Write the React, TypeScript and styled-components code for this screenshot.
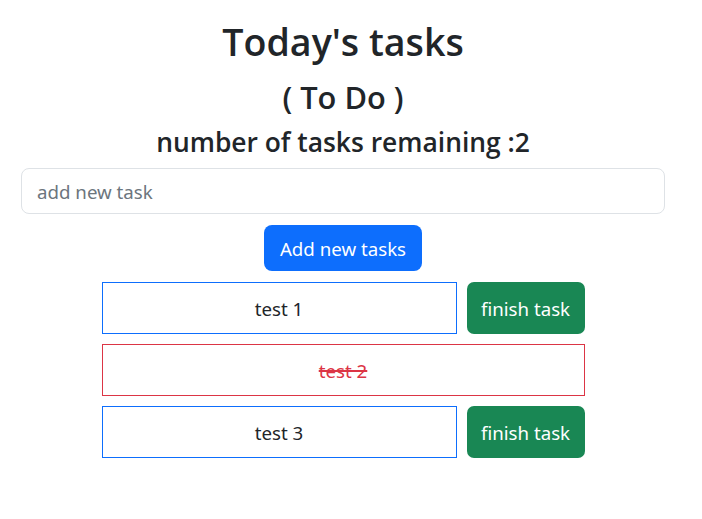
import React from "react";
import styled, { createGlobalStyle } from "styled-components";

const Global = createGlobalStyle`
  html, body { margin: 0; padding: 0; background: #fff; }
  body {
    font-family: "Noto Sans", "Open Sans", sans-serif;
    color: #212529;
  }
  * { box-sizing: border-box; }
`;

const Page = styled.div`
  display: flex;
  flex-direction: column;
  align-items: center;
  padding: 18px 37px 0 21px;
`;

const headingFont = `"Open Sans", "Noto Sans", sans-serif`;

const Title = styled.h1`
  margin: 0;
  font-family: ${headingFont};
  font-size: 37.6px;
  font-weight: 600;
  line-height: 48px;
`;

const Subtitle = styled.h2`
  margin: 14px 0 0;
  font-family: ${headingFont};
  font-size: 30.8px;
  font-weight: 600;
  line-height: 34px;
`;

const Remaining = styled.h3`
  margin: 13px 0 0;
  font-family: ${headingFont};
  font-size: 26.4px;
  font-weight: 600;
  line-height: 30px;
`;

const Input = styled.input`
  margin-top: 11px;
  width: 100%;
  height: 46px;
  padding: 0 15px;
  font-family: inherit;
  font-size: 18.7px;
  color: #212529;
  border: 1px solid #dee2e6;
  border-radius: 8px;
  outline: none;
  &::placeholder { color: #6c757d; }
`;

const PrimaryButton = styled.button`
  margin-top: 11px;
  height: 46px;
  padding: 0 16px;
  font-family: inherit;
  font-size: 18.7px;
  color: #fff;
  background: #0d6efd;
  border: none;
  border-radius: 8px;
`;

const List = styled.div`
  margin-top: 11px;
  width: 483px;
  display: flex;
  flex-direction: column;
  gap: 10px;
`;

const Row = styled.div`
  display: flex;
  gap: 10px;
`;

const TaskBox = styled.div<{ $done?: boolean }>`
  flex: 1;
  height: 52px;
  display: flex;
  align-items: center;
  justify-content: center;
  font-size: 18.7px;
  border: 1px solid ${(p) => (p.$done ? "#dc3545" : "#0d6efd")};
  color: ${(p) => (p.$done ? "#dc3545" : "#212529")};
  text-decoration: ${(p) => (p.$done ? "line-through" : "none")};
  text-decoration-thickness: 2px;
`;

const FinishButton = styled.button`
  width: 118px;
  height: 52px;
  font-family: inherit;
  font-size: 18.7px;
  color: #fff;
  background: #198754;
  border: none;
  border-radius: 7px;
`;

const tasks = [
  { name: "test 1", done: false },
  { name: "test 2", done: true },
  { name: "test 3", done: false },
];

export default function App() {
  return (
    <>
      <Global />
      <Page>
        <Title>Today's tasks</Title>
        <Subtitle>( To Do )</Subtitle>
        <Remaining>number of tasks remaining :2</Remaining>
        <Input placeholder="add new task" />
        <PrimaryButton>Add new tasks</PrimaryButton>
        <List>
          {tasks.map((t) => (
            <Row key={t.name}>
              <TaskBox $done={t.done}>{t.name}</TaskBox>
              {!t.done && <FinishButton>finish task</FinishButton>}
            </Row>
          ))}
        </List>
      </Page>
    </>
  );
}
